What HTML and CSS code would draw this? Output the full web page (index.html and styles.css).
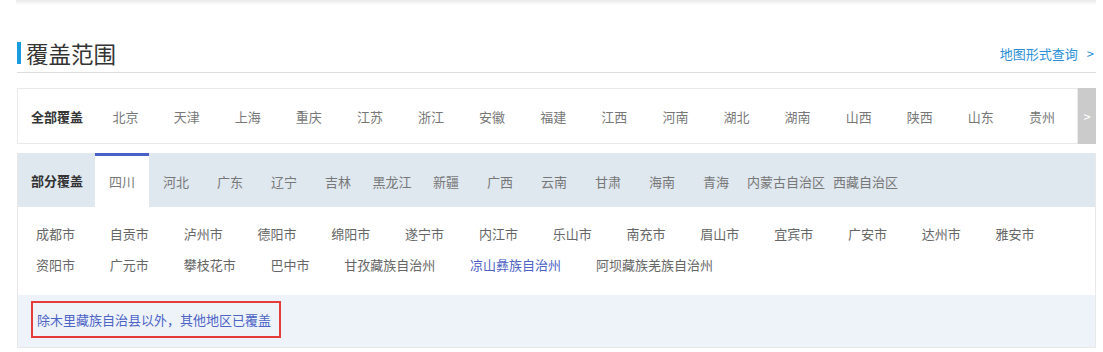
FILE: index.html
```html
<!DOCTYPE html>
<html lang="zh-CN">
<head>
    <meta charset="UTF-8">
    <title>覆盖范围</title>
    <link rel="stylesheet" href="styles.css">
</head>

<body>
    <div class="page">
        <div class="top-card"></div>

        <div class="section-head">
            <h2 class="section-title">覆盖范围</h2>
            <a class="map-link" href="#">地图形式查询 &gt;</a>
        </div>

        <div class="full-cover">
            <div class="full-list">
                <span class="cover-label">全部覆盖</span>
                <span class="full-item">北京</span>
                <span class="full-item">天津</span>
                <span class="full-item">上海</span>
                <span class="full-item">重庆</span>
                <span class="full-item">江苏</span>
                <span class="full-item">浙江</span>
                <span class="full-item">安徽</span>
                <span class="full-item">福建</span>
                <span class="full-item">江西</span>
                <span class="full-item">河南</span>
                <span class="full-item">湖北</span>
                <span class="full-item">湖南</span>
                <span class="full-item">山西</span>
                <span class="full-item">陕西</span>
                <span class="full-item">山东</span>
                <span class="full-item">贵州</span>
            </div>
            <div class="scroll-btn">&gt;</div>
        </div>

        <div class="part-cover">
            <div class="tab-bar">
                <span class="cover-label">部分覆盖</span>
                <span class="tab active">四川</span>
                <span class="tab">河北</span>
                <span class="tab">广东</span>
                <span class="tab">辽宁</span>
                <span class="tab">吉林</span>
                <span class="tab">黑龙江</span>
                <span class="tab">新疆</span>
                <span class="tab">广西</span>
                <span class="tab">云南</span>
                <span class="tab">甘肃</span>
                <span class="tab">海南</span>
                <span class="tab">青海</span>
                <span class="tab">内蒙古自治区</span>
                <span class="tab">西藏自治区</span>
            </div>

            <div class="city-list">
                <span class="city">成都市</span>
                <span class="city">自贡市</span>
                <span class="city">泸州市</span>
                <span class="city">德阳市</span>
                <span class="city">绵阳市</span>
                <span class="city">遂宁市</span>
                <span class="city">内江市</span>
                <span class="city">乐山市</span>
                <span class="city">南充市</span>
                <span class="city">眉山市</span>
                <span class="city">宜宾市</span>
                <span class="city">广安市</span>
                <span class="city">达州市</span>
                <span class="city">雅安市</span>
                <span class="city">资阳市</span>
                <span class="city">广元市</span>
                <span class="city">攀枝花市</span>
                <span class="city">巴中市</span>
                <span class="city">甘孜藏族自治州</span>
                <span class="city selected">凉山彝族自治州</span>
                <span class="city">阿坝藏族羌族自治州</span>
            </div>

            <div class="note-area">
                <span class="note">除木里藏族自治县以外，其他地区已覆盖</span>
            </div>
        </div>
    </div>
</body>
</html>
```

FILE: styles.css
```css
* {
    box-sizing: border-box;
    margin: 0;
    padding: 0;
}

body {
    background: #fff;
    font-family: "Microsoft YaHei", "Noto Sans CJK SC", sans-serif;
    font-size: 13px;
    color: #666;
}

.page {
    padding: 0 7px 0 17px;
}

.top-card {
    height: 5px;
    margin-left: -1px;
    background: linear-gradient(#e9e9e9, #f6f6f6 60%, #fff);
}

.section-head {
    display: flex;
    justify-content: space-between;
    align-items: center;
    margin-top: 33px;
    height: 35px;
    padding-bottom: 4px;
    border-bottom: 1px solid #dedede;
}

.section-title {
    display: flex;
    align-items: center;
    font-size: 22.5px;
    font-weight: normal;
    color: #333;
    line-height: 30px;
}

.section-title::before {
    content: '';
    display: block;
    width: 4px;
    height: 22px;
    margin-right: 5px;
    background-color: #1a9be0;
}

.map-link {
    color: #2b8fd6;
    text-decoration: none;
    font-size: 13px;
    margin-top: 1px;
    margin-right: 2px;
    word-spacing: 6px;
}

.full-cover {
    display: flex;
    margin-top: 15px;
    height: 56px;
}

.full-list {
    flex: 1;
    display: flex;
    align-items: center;
    border: 1px solid #e9e9e9;
    padding-left: 13px;
}

.cover-label {
    width: 64px;
    flex-shrink: 0;
    font-weight: bold;
    color: #333;
}

.full-item {
    width: 61.1px;
    flex-shrink: 0;
    text-align: center;
    color: #777;
}

.scroll-btn {
    width: 18px;
    background-color: #cbcbcb;
    color: #fff;
    display: flex;
    align-items: center;
    justify-content: center;
    font-size: 13px;
}

.part-cover {
    margin-top: 9px;
    border: 1px solid #e8e8e8;
    border-top: none;
}

.tab-bar {
    display: flex;
    align-items: stretch;
    height: 54px;
    background-color: #dfe7ef;
    padding-left: 13px;
}

.tab-bar .cover-label {
    display: flex;
    align-items: center;
}

.tab {
    min-width: 54px;
    padding: 3px 4px 0;
    display: flex;
    align-items: center;
    justify-content: center;
    color: #777;
}

.tab.active {
    background-color: #fff;
    border-top: 3px solid #4a60c8;
    padding-top: 0;
}

.city-list {
    display: flex;
    flex-wrap: wrap;
    padding: 11px 0 15px 18px;
    background-color: #fff;
}

.city {
    line-height: 31px;
    margin-right: 34.8px;
    color: #666;
}

.city.selected {
    color: #4d63c6;
}

.note-area {
    background-color: #eef3fa;
    padding: 6px 13px 9px;
}

.note {
    display: inline-block;
    border: 2px solid #e53b3b;
    padding: 1px 8px 0 4px;
    line-height: 32px;
    color: #4d63c6;
}
```
